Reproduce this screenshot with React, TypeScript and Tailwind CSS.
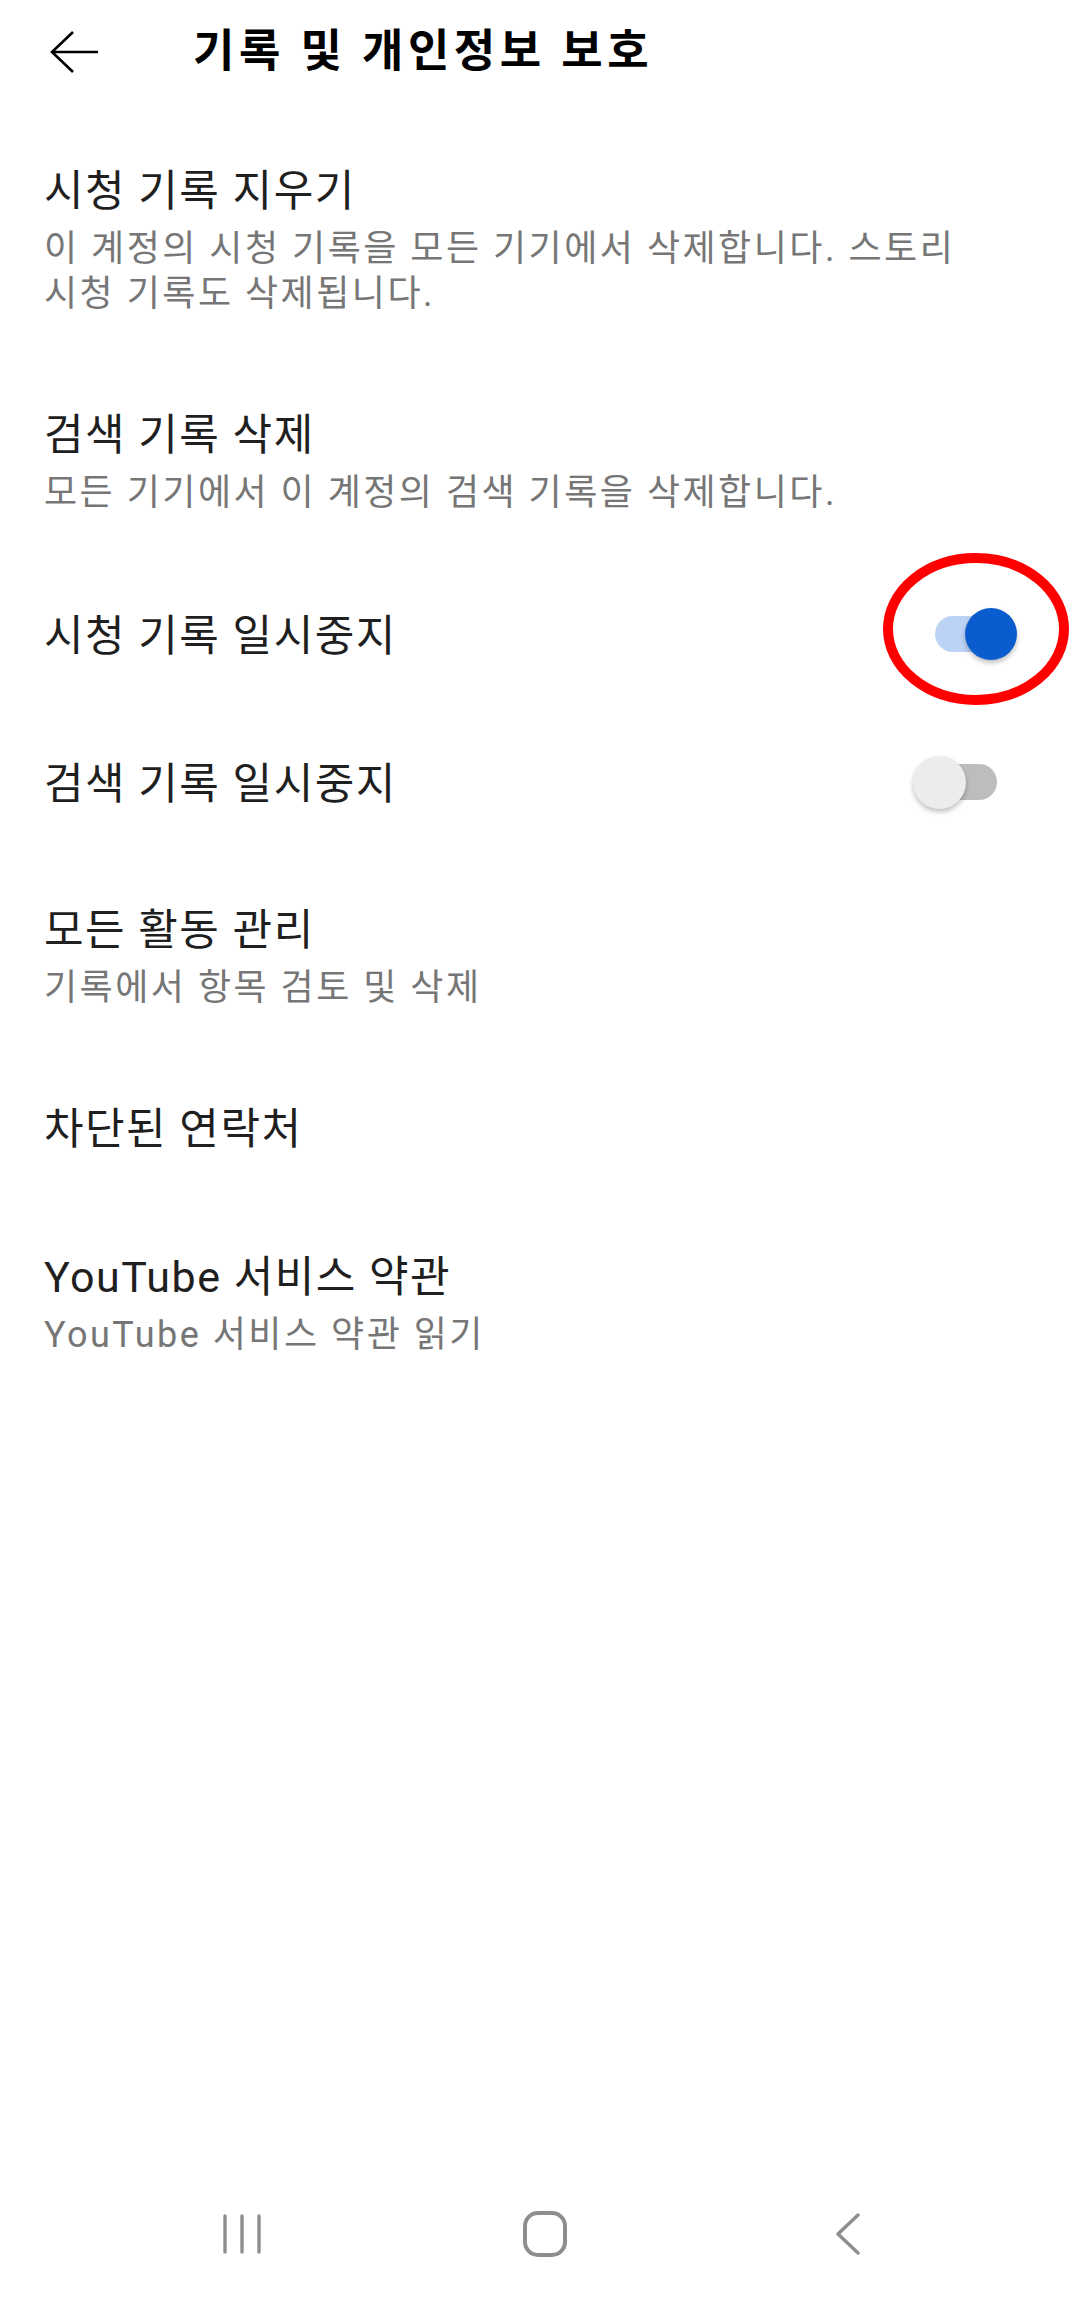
import React from "react";

const font = { fontFamily: 'Roboto, "Noto Sans CJK KR", sans-serif' };

type Item = { title: string; sub?: string[] };

const Row = ({ title, sub }: Item) => (
  <div className="px-[44px] py-[44px]">
    <div className="text-[43px] leading-[60px] text-[#1f1f1f] tracking-[1.5px]">{title}</div>
    {sub && (
      <div className="mt-[6px] text-[36px] leading-[45px] text-[#767676] tracking-[2.5px]">
        {sub.map((line) => (
          <div key={line}>{line}</div>
        ))}
      </div>
    )}
  </div>
);

const ToggleRow = ({ title, on }: { title: string; on: boolean }) => (
  <div className="flex items-center justify-between pl-[44px] pr-[63px] py-[44px]">
    <div className="text-[43px] leading-[60px] text-[#1f1f1f] tracking-[1.5px] translate-y-[2px]">{title}</div>
    <div className="relative w-[104px] h-[60px]">
      {on ? (
        <>
          <div className="absolute left-[22px] top-[12px] w-[70px] h-[36px] rounded-full bg-[#bcd3f5]" />
          <div className="absolute right-0 top-[4px] w-[52px] h-[52px] rounded-full bg-[#0b5dcf] shadow-[0_3px_5px_rgba(0,0,0,0.25)]" />
          <svg className="absolute -left-[30px] -top-[51px]" width="186" height="152" viewBox="0 0 186 152">
            <ellipse cx="93" cy="76" rx="88" ry="71" fill="none" stroke="#ff0000" strokeWidth="10" />
          </svg>
        </>
      ) : (
        <>
          <div className="absolute left-[14px] top-[12px] w-[70px] h-[36px] rounded-full bg-[#bdbdbd]" />
          <div className="absolute left-0 top-[4px] w-[53px] h-[53px] rounded-full bg-[#ececec] shadow-[0_3px_5px_rgba(0,0,0,0.25)]" />
        </>
      )}
    </div>
  </div>
);

export default function App() {
  return (
    <div className="min-h-[2301px] flex flex-col bg-white" style={font}>
      <div className="flex items-center h-[117px] pb-[13px]">
        <svg className="ml-[50px]" width="50" height="44" viewBox="0 0 50 44">
          <path d="M2 22 H48 M23 2 L2 22 L23 42" fill="none" stroke="#000" strokeWidth="2.6" strokeLinejoin="miter" />
        </svg>
        <div className="ml-[93px] text-[45px] leading-[60px] font-bold text-black tracking-[4.5px]">
          기록 및 개인정보 보호
        </div>
      </div>

      <Row title="시청 기록 지우기" sub={["이 계정의 시청 기록을 모든 기기에서 삭제합니다. 스토리", "시청 기록도 삭제됩니다."]} />
      <Row title="검색 기록 삭제" sub={["모든 기기에서 이 계정의 검색 기록을 삭제합니다."]} />
      <ToggleRow title="시청 기록 일시중지" on />
      <ToggleRow title="검색 기록 일시중지" on={false} />
      <Row title="모든 활동 관리" sub={["기록에서 항목 검토 및 삭제"]} />
      <Row title="차단된 연락처" />
      <Row title="YouTube 서비스 약관" sub={["YouTube 서비스 약관 읽기"]} />

      <div className="mt-auto h-[134px] flex items-center pl-[90px]">
        <div className="w-[303px] flex justify-center">
          <svg width="40" height="40" viewBox="0 0 40 40">
            <path d="M3 2 V38 M20 2 V38 M37 2 V38" stroke="#8e8e8e" strokeWidth="3.4" strokeLinecap="round" />
          </svg>
        </div>
        <div className="w-[303px] flex justify-center">
          <svg width="44" height="46" viewBox="0 0 44 46">
            <rect x="2" y="2" width="40" height="42" rx="13" fill="none" stroke="#8e8e8e" strokeWidth="4" />
          </svg>
        </div>
        <div className="w-[303px] flex justify-center">
          <svg width="28" height="42" viewBox="0 0 28 42">
            <path d="M24 2 L4 21 L24 40" fill="none" stroke="#8e8e8e" strokeWidth="3.4" strokeLinecap="round" strokeLinejoin="round" />
          </svg>
        </div>
      </div>
    </div>
  );
}
